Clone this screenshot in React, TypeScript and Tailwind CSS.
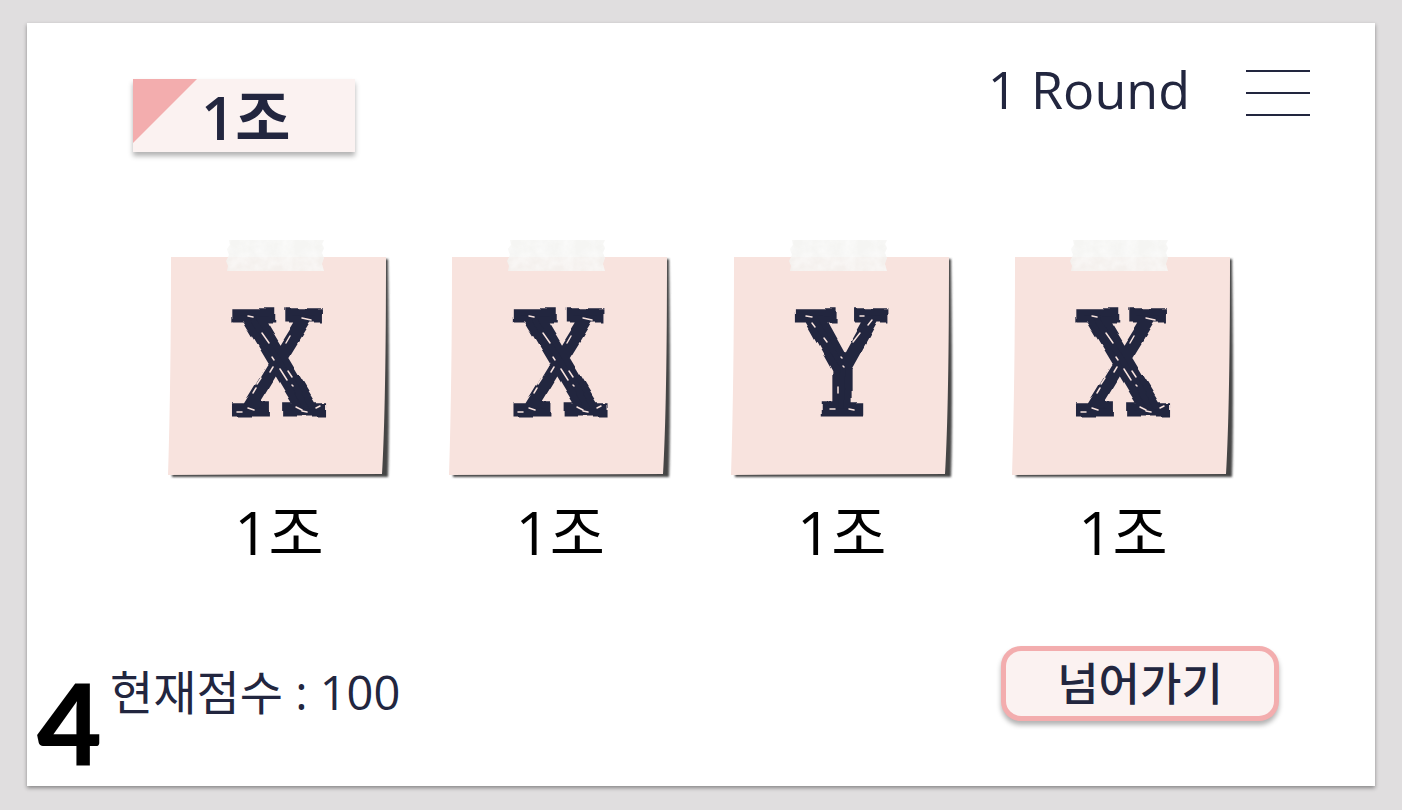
type Letter = "X" | "Y";

interface Pick {
    id: number;
    team: string;
    letter: Letter;
}

const picks: Pick[] = [
    { id: 1, team: "1조", letter: "X" },
    { id: 2, team: "1조", letter: "X" },
    { id: 3, team: "1조", letter: "Y" },
    { id: 4, team: "1조", letter: "X" },
];

// Small pen gaps that make the letters look inked by hand
const scratches: Record<Letter, string> = {
    X: "M94 93l7 10M122 96l-4 7M134 78l9 2M80 76l5 1M104 117l2 3M112 129l7 11M120 131l4 6M124 145l1 1M105 127l-3 5M93 138l-4 6M88 148l-3 5M69 172l5 0M80 168l6 2M128 167l6 3M134 171l5 1M148 168l4 -2",
    Y: "M75 76l6 1M81 83l3 4M93 98l3 4M122 102l7 -9M137 85l4 -5M129 76l4 0M110 117l1 1M112 126l1 1M107 147l0 6M99 169l5 0M118 169l5 1",
};

// Shared by all notes through url(#id)
function NoteFilters() {
    return (
        <svg className="absolute h-0 w-0" aria-hidden="true">
            <defs>
                <filter id="note-shadow" x="-10%" y="-10%" width="120%" height="120%">
                    <feGaussianBlur stdDeviation="1.2" />
                </filter>
                <filter id="tape-grain" x="0" y="0" width="100%" height="100%">
                    <feTurbulence type="fractalNoise" baseFrequency="0.08" numOctaves="3" seed="4" />
                    <feColorMatrix values="0 0 0 0 1  0 0 0 0 1  0 0 0 0 1  2 0 0 0 -0.6" />
                    <feComposite in2="SourceGraphic" operator="in" />
                </filter>
                <filter id="rough-ink" x="-10%" y="-10%" width="120%" height="120%" colorInterpolationFilters="sRGB">
                    <feTurbulence type="fractalNoise" baseFrequency="0.05" numOctaves="1" seed="7" />
                    <feDisplacementMap in="SourceGraphic" scale="7" xChannelSelector="R" yChannelSelector="G" />
                </filter>
            </defs>
        </svg>
    );
}

function StickyNote({ letter }: { letter: Letter }) {
    return (
        <div className="relative flex h-[240px] w-[222px] items-center justify-center pt-3">
            <svg viewBox="0 0 222 240" className="absolute inset-0 h-full w-full overflow-visible" aria-hidden="true">
                <path d="M10 22L220 19Q222 170 220 237L4 237Z" fill="#454545" filter="url(#note-shadow)" />
                <path d="M3 17H218Q218 165 214 234L0 235Q3 140 3 17Z" fill="#f8e3de" />
                <path d="M61 0H156L154 4L156 8L154 13L156 18L154 24L156 31H59L60 26L58 21L61 15L59 9L62 5Z" fill="#f3f3f0" fillOpacity="0.82" />
                <path d="M61 0H156L154 4L156 8L154 13L156 18L154 24L156 31H59L60 26L58 21L61 15L59 9L62 5Z" fill="#fff" opacity="0.5" filter="url(#tape-grain)" />
            </svg>
            <span className="relative font-['DejaVu_Serif_Condensed','DejaVu_Serif',serif] text-[138px] leading-none text-[#22263f] [-webkit-text-stroke:7px_#22263f] [filter:url(#rough-ink)]">
                {letter}
            </span>
            <svg viewBox="0 0 222 240" className="absolute inset-0 h-full w-full" aria-hidden="true">
                <path d={scratches[letter]} fill="none" stroke="#f8e3de" strokeWidth="1.5" strokeLinecap="round" />
            </svg>
        </div>
    );
}

function Header() {
    return (
        <header className="flex items-start justify-between pr-[65px] pl-[106px]">
            <div className="relative mt-4 h-[73px] w-[222px] bg-[#fbf2f1] shadow-[0_4px_5px_rgba(0,0,0,0.3)]">
                <svg viewBox="0 0 64 64" className="absolute top-0 left-0 h-16 w-16" aria-hidden="true">
                    <path d="M0 0H64L0 64Z" fill="#f3adae" />
                </svg>
                <h1 className="relative pl-[68px] text-[60px] leading-[76px] font-semibold">1조</h1>
            </div>
            <div className="flex items-center gap-14">
                <p className="pb-2 text-[52px] leading-[52px]">1 Round</p>
                <button type="button" aria-label="메뉴" className="flex w-16 flex-col gap-5">
                    <span className="h-[2px] w-full bg-[#22263f]" />
                    <span className="h-[2px] w-full bg-[#22263f]" />
                    <span className="h-[2px] w-full bg-[#22263f]" />
                </button>
            </div>
        </header>
    );
}

export default function App() {
    return (
        <div className="flex min-h-screen bg-[#e0dedf] px-[27px] pt-[23px] pb-6 font-['Open_Sans','Noto_Sans_CJK_KR',sans-serif] text-[#22263f]">
            <NoteFilters />
            <main className="flex flex-1 flex-col bg-white pt-10 shadow-[0_2px_4px_rgba(0,0,0,0.4)]">
                <Header />

                <ul className="mx-auto mt-[88px] flex w-full max-w-[1066px] justify-between">
                    {picks.map((pick) => (
                        <li key={pick.id} className="flex flex-col items-center">
                            <StickyNote letter={pick.letter} />
                            <p className="mt-4 text-[60px] leading-[72px] text-black">{pick.team}</p>
                        </li>
                    ))}
                </ul>

                <footer className="mt-auto flex items-start justify-between pr-24 pb-4 pl-[10px]">
                    <div className="flex items-start gap-2">
                        <span className="mt-7 font-['Lato',sans-serif] text-[112px] leading-[96px] font-black text-black">4</span>
                        <p className="mt-3 text-[47px] leading-[68px]">현재점수 : 100</p>
                    </div>
                    <button
                        type="button"
                        className="h-[75px] w-[278px] rounded-[20px] border-[5px] border-[#f3adae] bg-[#fbf2f1] text-[45px] leading-[60px] font-medium shadow-[0_4px_5px_rgba(0,0,0,0.3)]"
                    >
                        넘어가기
                    </button>
                </footer>
            </main>
        </div>
    );
}
